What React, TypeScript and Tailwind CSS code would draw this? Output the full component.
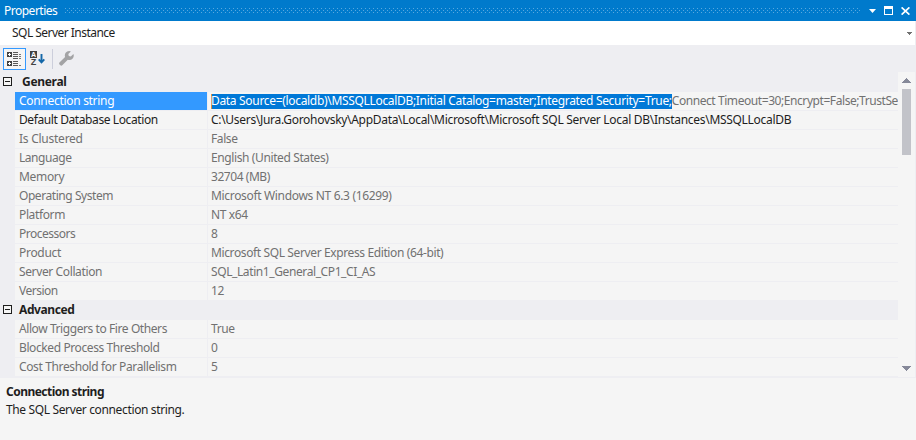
type Row = {
  name: string;
  value: string;
  nameTracking: string;
  valueTracking: string;
  active?: boolean;
  selection?: string;
};

const general: Row[] = [
  {
    name: "Connection string",
    nameTracking: "tracking-[-0.3px]",
    selection: "Data Source=(localdb)\\MSSQLLocalDB;Initial Catalog=master;Integrated Security=True;",
    value: "Connect Timeout=30;Encrypt=False;TrustServerCertificate=True",
    valueTracking: "tracking-[-0.32px]",
  },
  {
    name: "Default Database Location",
    nameTracking: "tracking-[-0.4px]",
    value: "C:\\Users\\Jura.Gorohovsky\\AppData\\Local\\Microsoft\\Microsoft SQL Server Local DB\\Instances\\MSSQLLocalDB",
    valueTracking: "tracking-[-0.3px]",
    active: true,
  },
  { name: "Is Clustered", nameTracking: "tracking-[-0.25px]", value: "False", valueTracking: "tracking-[-0.4px]" },
  { name: "Language", nameTracking: "tracking-[-0.45px]", value: "English (United States)", valueTracking: "tracking-[-0.39px]" },
  { name: "Memory", nameTracking: "tracking-[-0.33px]", value: "32704 (MB)", valueTracking: "tracking-[-0.45px]" },
  { name: "Operating System", nameTracking: "tracking-[-0.44px]", value: "Microsoft Windows NT 6.3 (16299)", valueTracking: "tracking-[-0.33px]" },
  { name: "Platform", nameTracking: "tracking-[-0.37px]", value: "NT x64", valueTracking: "tracking-[-0.35px]" },
  { name: "Processors", nameTracking: "tracking-[-0.5px]", value: "8", valueTracking: "tracking-normal" },
  { name: "Product", nameTracking: "tracking-[-0.3px]", value: "Microsoft SQL Server Express Edition (64-bit)", valueTracking: "tracking-[-0.38px]" },
  { name: "Server Collation", nameTracking: "tracking-[-0.38px]", value: "SQL_Latin1_General_CP1_CI_AS", valueTracking: "tracking-[-0.4px]" },
  { name: "Version", nameTracking: "tracking-[-0.5px]", value: "12", valueTracking: "tracking-[-0.4px]" },
];

const advanced: Row[] = [
  { name: "Allow Triggers to Fire Others", nameTracking: "tracking-[-0.42px]", value: "True", valueTracking: "tracking-[-0.4px]" },
  { name: "Blocked Process Threshold", nameTracking: "tracking-[-0.4px]", value: "0", valueTracking: "tracking-normal" },
  { name: "Cost Threshold for Parallelism", nameTracking: "tracking-[-0.37px]", value: "5", valueTracking: "tracking-normal" },
];

function PropertyRow({ row }: { row: Row }) {
  return (
    <div className={`flex h-[19px] border-b border-[#eeeef2] ${row.active ? "text-[#1e1e1e]" : "text-[#717171]"}`}>
      <div className="h-[19px] w-[15px] shrink-0 bg-[#eeeef2]" />
      <div className={`flex w-[192px] shrink-0 items-center pl-1 ${row.nameTracking} ${row.selection ? "bg-[#3399ff] text-white" : ""}`}>
        {row.name}
      </div>
      <div className={`flex min-w-0 flex-1 items-center overflow-hidden border-l border-[#eeeef2] pl-[3px] ${row.valueTracking}`}>
        {row.selection && (
          <span className="flex h-[15px] shrink-0 items-center border-l border-[#e0903c] bg-[#0078d7] text-white">
            <span className="-ml-px">{row.selection}</span>
          </span>
        )}
        <span className={row.selection ? "tracking-[-0.43px]" : ""}>{row.value}</span>
      </div>
    </div>
  );
}

function Category({ title, titleClass, rows }: { title: string; titleClass: string; rows: Row[] }) {
  return (
    <section>
      <div className="flex h-[19px] items-center bg-[#eeeef2] pb-px pl-[3px] font-bold text-[#1e1e1e]">
        <span className="mb-px flex size-[9px] items-center justify-center border border-[#1e1e1e] bg-[#f5f5f5]">
          <span className="h-px w-[5px] bg-[#1e1e1e]" />
        </span>
        <span className={titleClass}>{title}</span>
      </div>
      {rows.map((row) => (
        <PropertyRow key={row.name} row={row} />
      ))}
    </section>
  );
}

function Grip() {
  return (
    <svg className="ml-2 h-[5px] w-[795px]" shapeRendering="crispEdges">
      <defs>
        <pattern id="grip" width="4" height="4" patternUnits="userSpaceOnUse">
          <rect width="1" height="1" fill="#59a8de" />
          <rect x="2" y="2" width="1" height="1" fill="#59a8de" />
        </pattern>
      </defs>
      <rect width="795" height="5" fill="url(#grip)" />
    </svg>
  );
}

function CategorizedIcon() {
  return (
    <svg width="15" height="14" viewBox="0 0 15 14" shapeRendering="crispEdges">
      <path fill="#424242" d="M0 0h5v5H0zM0 9h5v5H0z" />
      <path fill="#ffffff" d="M2 1h1v1h1v1H3v1H2V3H1V2h1zM2 10h1v1h1v1H3v1H2v-1H1v-1h1z" />
      <path stroke="#5a5a5a" d="M6 .5h5M6 2.5h5M6 4.5h5M6 6.5h5M6 9.5h5M6 11.5h5M6 13.5h5" />
      <path stroke="#777777" d="M12 2.500h2M12 4.500h2M12 6.500h2M12 13.500h2" />
    </svg>
  );
}

function SortIcon() {
  return (
    <div className="ml-[4px] flex items-center">
      <div className="flex w-[7px] flex-col items-center font-['Liberation_Sans',sans-serif] font-bold">
        <span className="flex h-[7px] w-[7px] items-center justify-center bg-[#424242] text-[7px] leading-[7px] text-white">A</span>
        <span className="mt-[1px] h-[7px] text-[9px] leading-[7px] text-[#424242]">Z</span>
      </div>
      <svg className="ml-[1px]" width="7" height="10" viewBox="0 0 7 10">
        <path d="M3.500 0v8.500M.7 5.400l2.800 3 2.800-3" fill="none" stroke="#1467a8" strokeWidth="1.900" />
      </svg>
    </div>
  );
}

function WrenchIcon() {
  return (
    <svg className="ml-[6px]" width="15" height="15" viewBox="0 0 15 15">
      <path
        fill="#a3a3a5"
        d="M10.300 0a4.400 4.400 0 0 0-4.200 5.900L.7 11.300a1.700 1.700 0 0 0 0 2.400l.4.400a1.700 1.700 0 0 0 2.400 0l5.300-5.400a4.400 4.400 0 0 0 5.600-5.800l-2.600 2.600-2-.5-.5-2L11.900.4A4.400 4.400 0 0 0 10.300 0z"
      />
    </svg>
  );
}

function ScrollBar() {
  return (
    <div className="flex w-[17px] shrink-0 flex-col items-center bg-[#f5f5f5]">
      <svg className="mt-[6px]" width="9" height="5" viewBox="0 0 9 5" shapeRendering="crispEdges">
        <path fill="#868999" d="M4 0h1v1h1v1h1v1h1v1h1v1H0V4h1V3h1V2h1V1h1z" />
      </svg>
      <div className="mt-[6px] h-[66px] w-[9px] bg-[#c2c3c9]" />
      <svg className="mt-auto mb-[6px]" width="9" height="5" viewBox="0 0 9 5" shapeRendering="crispEdges">
        <path fill="#868999" d="M0 0h9v1H8v1H7v1H6v1H5v1H4V4H3V3H2V2H1V1H0z" />
      </svg>
    </div>
  );
}

export default function App() {
  return (
    <div className="flex h-[440px] w-[916px] flex-col overflow-hidden bg-[#f5f5f5] font-['Noto_Sans',sans-serif] text-[12px] leading-4 whitespace-pre">
      <header className="flex h-[21px] shrink-0 items-center bg-[#007acc] pl-1 text-white">
        <span className="w-[53px] pt-px tracking-[-0.5px]">Properties</span>
        <Grip />
        <svg className="ml-[9px]" width="7" height="4" viewBox="0 0 7 4">
          <path fill="#ffffff" d="M0 0h7L3.500 4z" />
        </svg>
        <div className="ml-[8px] h-[9px] w-[9px] border border-t-[3px] border-white" />
        <svg className="ml-[8px]" width="9" height="8" viewBox="0 0 9 8">
          <path stroke="#ffffff" strokeWidth="1.700" d="M.6.4l7.800 7.200M8.400.4.6 7.600" />
        </svg>
      </header>

      <div className="flex h-6 shrink-0 items-center justify-between border-r border-[#eeeef2] bg-white pr-[3px] pl-3 text-[#1e1e1e]">
        <span className="tracking-[-0.53px]">SQL Server Instance</span>
        <svg className="mt-px" width="5" height="3" viewBox="0 0 5 3" shapeRendering="crispEdges">
          <path fill="#717171" d="M0 0h5v1H4v1H3v1H2V2H1V1H0z" />
        </svg>
      </div>

      <div className="flex h-[27px] shrink-0 items-center bg-[#eeeef2] pl-[3px]">
        <div className="flex h-[22px] w-[23px] items-center justify-center border border-[#3399ff] bg-[#f5f5f5]">
          <CategorizedIcon />
        </div>
        <SortIcon />
        <div className="ml-[7px] h-5 w-px bg-[#cccedb]" />
        <WrenchIcon />
      </div>

      <main className="flex h-[306px] shrink-0 border-r border-b border-[#eeeef2]">
        <div className="min-w-0 flex-1 bg-[#f5f5f5]">
          <div className="h-px bg-[#eeeef2]" />
          <Category title="General" titleClass="ml-[10px] tracking-[-0.3px]" rows={general} />
          <Category title="Advanced" titleClass="ml-[7px] tracking-[-0.4px]" rows={advanced} />
        </div>
        <ScrollBar />
      </main>

      <footer className="flex flex-col gap-[2px] pt-[6px] pl-[6px] text-[#1e1e1e]">
        <div className="font-bold tracking-[-0.53px]">Connection string</div>
        <div className="tracking-[-0.36px]">The SQL Server connection string.</div>
      </footer>
    </div>
  );
}
